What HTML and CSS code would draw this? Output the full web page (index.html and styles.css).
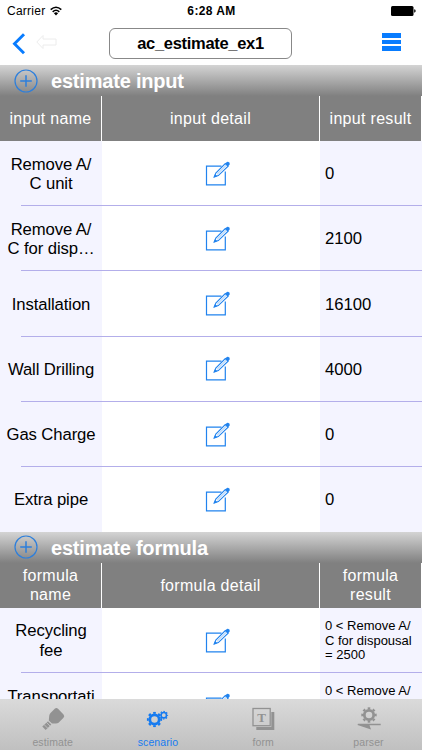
FILE: index.html
```
<!DOCTYPE html>
<html lang="en">
<head>
    <meta charset="UTF-8">
    <meta name="viewport" content="width=device-width, initial-scale=1.0">
    <title>ac_estimate_ex1</title>
    <link rel="stylesheet" href="styles.css">
</head>
<body>
    <!-- shared icons -->
    <svg class="defs">
        <symbol id="edit" viewBox="0 0 26 26">
            <path d="M16.5 5.2H1.5V23.8H20.3V10.5" fill="none" stroke="#2183ee" stroke-width="1.2"/>
            <path d="M9.2 16L10.8 12.1L20.3 2.5L23.1 5.2L13.3 14.6Z" fill="#fff" stroke="#2183ee" stroke-width="1.1"/>
            <path d="M12.2 13.2L21.3 4.2M9.2 16L10.2 13.4L11.9 15Z" fill="#2183ee" stroke="#2183ee" stroke-width=".5"/>
            <path d="M20.2 2.7L21.8 1.1Q23 .3 24.2 1.4Q25.2 2.6 24.5 3.8L22.8 5.4Z" fill="#2183ee"/>
        </symbol>
        <symbol id="plus" viewBox="0 0 24 24">
            <circle cx="12" cy="12" r="11" fill="none" stroke="#2d7fdc" stroke-width="1.2"/>
            <path d="M12 6.2V17.8M6.2 12H17.8" stroke="#2d7fdc" stroke-width="1.5"/>
        </symbol>
        <symbol id="gear" viewBox="0 0 16 16">
            <circle cx="8" cy="8" r="4.7" fill="none" stroke="currentColor" stroke-width="2.8"/>
            <circle cx="8" cy="8" r="6.7" fill="none" stroke="currentColor" stroke-width="2" pathLength="80" stroke-dasharray="5 5" stroke-dashoffset="2.5"/>
        </symbol>
    </svg>

    <div class="status">
        <div class="carrier">Carrier
            <svg width="12" height="10" viewBox="0 0 12 10"><path d="M.7 3.7Q6-1.2 11.3 3.7M2.7 5.8Q6 2.7 9.3 5.8" fill="none" stroke="#000" stroke-width="1.6"/><path d="M3.9 7.2Q6 5.5 8.1 7.2L6 9.4Z"/></svg>
        </div>
        <div class="time">6:28 AM</div>
        <svg class="battery" width="25" height="10" viewBox="0 0 25 10"><rect width="22.5" height="10" rx="1.5"/><path d="M23.2 3.3Q24.7 3.6 24.7 5T23.2 6.7Z"/></svg>
    </div>

    <div class="nav">
        <svg class="back" width="14" height="22" viewBox="0 0 14 22"><path d="M12 1.3L2.5 10.8L12 20.3" fill="none" stroke="#087cff" stroke-width="2.9"/></svg>
        <svg class="undo" width="21" height="16" viewBox="0 0 21 16"><path d="M.8 8L7 1.5V5H20V11H7V14.5Z" fill="none" stroke="#ececec"/></svg>
        <div class="title">ac_estimate_ex1</div>
        <div class="menu"><i></i><i></i><i></i></div>
    </div>

    <div class="content">
        <div class="section"><svg><use href="#plus"/></svg><h2>estimate input</h2></div>
        <div class="row head">
            <div class="name">input name</div><div class="detail">input detail</div><div class="result">input result</div>
        </div>
        <div class="row"><div class="name">Remove A/<br>C unit</div><div class="detail"><svg><use href="#edit"/></svg></div><div class="result">0</div></div>
        <div class="row"><div class="name">Remove A/<br>C for disp…</div><div class="detail"><svg><use href="#edit"/></svg></div><div class="result">2100</div></div>
        <div class="row"><div class="name">Installation</div><div class="detail"><svg><use href="#edit"/></svg></div><div class="result">16100</div></div>
        <div class="row"><div class="name">Wall Drilling</div><div class="detail"><svg><use href="#edit"/></svg></div><div class="result">4000</div></div>
        <div class="row"><div class="name">Gas Charge</div><div class="detail"><svg><use href="#edit"/></svg></div><div class="result">0</div></div>
        <div class="row last"><div class="name">Extra pipe</div><div class="detail"><svg><use href="#edit"/></svg></div><div class="result">0</div></div>

        <div class="section"><svg><use href="#plus"/></svg><h2>estimate formula</h2></div>
        <div class="row head">
            <div class="name">formula<br>name</div><div class="detail">formula detail</div><div class="result">formula<br>result</div>
        </div>
        <div class="row"><div class="name">Recycling<br>fee</div><div class="detail"><svg><use href="#edit"/></svg></div><div class="result small">0 &lt; Remove A/<br>C for dispousal<br>= 2500</div></div>
        <div class="row"><div class="name">Transportati<br><br></div><div class="detail"><svg><use href="#edit"/></svg></div><div class="result small">0 &lt; Remove A/<br><br><br></div></div>
    </div>

    <div class="tabs">
        <div class="tab">
            <svg width="26" height="26" viewBox="0 0 26 26"><path d="M10.5 7L15 2.5Q16.5 1.3 18 2.7L23.5 8.5Q25 10.2 23.5 11.8L18.5 16.7Q17.5 17.6 15.5 17.5L12 17.6L8.8 14.4L9.2 10Q9.3 8.3 10.5 7Z" fill="#929292"/><path d="M8 15.2L11.3 18.5L5.7 24L2.3 20.5Z" fill="#929292"/><path d="M6.3 16.3L10 20M4 18.5L7.8 22.3" stroke="#c8c8c8" stroke-width=".8"/></svg>
            <span>estimate</span>
        </div>
        <div class="tab active">
            <svg width="26" height="26" viewBox="0 0 26 26"><use href="#gear" x="1.5" y="5.5" width="16" height="16"/><use href="#gear" x="14.2" y="4.6" width="9.2" height="9.2"/></svg>
            <span>scenario</span>
        </div>
        <div class="tab">
            <svg width="26" height="26" viewBox="0 0 26 26"><path d="M21.3 6H24.3V24H6.3V21H21.3Z" fill="#929292"/><rect x="3" y="2.5" width="17.2" height="17.2" fill="none" stroke="#929292" stroke-width="1.3"/><text class="letter" x="11.7" y="15.6" text-anchor="middle">T</text></svg>
            <span>form</span>
        </div>
        <div class="tab">
            <svg width="26" height="26" viewBox="0 0 26 26"><use href="#gear" x="5" y="1" width="16" height="16"/><path d="M2 17.8H24.7V19.3H13.5L15 23.5L1.5 19Z" fill="#929292"/></svg>
            <span>parser</span>
        </div>
    </div>
</body>
</html>
```
FILE: styles.css
```
* {
    box-sizing: border-box;
}
body {
    margin: 0;
    height: 750px;
    overflow: hidden;
    display: flex;
    flex-direction: column;
    font-family: "Liberation Sans", Arial, sans-serif;
    font-size: 16.7px;
    color: #000;
    background: #fff;
}
svg {
    display: block;
    flex: none;
}
.defs {
    width: 0;
    height: 0;
    position: absolute;
}
.status {
    height: 22px;
    flex: none;
    display: grid;
    grid-template-columns: 1fr auto 1fr;
    align-items: center;
    padding: 0 6px 0 7px;
    font-size: 12px;
}
.carrier {
    display: flex;
    align-items: center;
    gap: 5px;
    letter-spacing: 0.25px;
}
.time {
    font-weight: bold;
    letter-spacing: 0.4px;
}
.battery {
    justify-self: end;
}
.nav {
    height: 43px;
    flex: none;
    display: flex;
    align-items: center;
    padding: 0 21px 0 12px;
}
.undo {
    margin-left: 10px;
    margin-top: -3px;
}
.title {
    width: 183px;
    height: 31px;
    margin-left: 52px;
    border: 1px solid #888;
    border-radius: 6px;
    font-weight: bold;
    font-size: 16.5px;
    letter-spacing: -0.3px;
    line-height: 29px;
    text-align: center;
}
.menu {
    margin-left: auto;
    margin-top: -3px;
    width: 19px;
    display: flex;
    flex-direction: column;
    gap: 1.7px;
}
.menu i {
    height: 4.7px;
    background: #087cff;
}
.content {
    flex: 1;
    min-height: 0;
    overflow: hidden;
}
.section {
    height: 31px;
    display: flex;
    align-items: center;
    padding-left: 14px;
    background: linear-gradient(#d4d4d4, #808080);
}
.section svg {
    width: 24px;
    height: 24px;
}
.section h2 {
    margin: 0 0 0 13px;
    font-size: 20px;
    letter-spacing: -0.2px;
    line-height: 24px;
    padding-top: 1px;
    color: #fff;
}
.row {
    position: relative;
    height: 65.15px;
    display: grid;
    grid-template-columns: 102px 218px 102px;
    line-height: 19.5px;
}
.row > div {
    display: flex;
    align-items: center;
    justify-content: center;
    text-align: center;
    padding-top: 1px;
}
.row .name {
    letter-spacing: -0.1px;
}
.row .name,
.row .result {
    background: #f4f4ff;
}
.row .result {
    justify-content: flex-start;
    text-align: left;
    padding-left: 5px;
}
.row .detail svg {
    width: 26px;
    height: 26px;
    margin-left: 13px;
}
/* separator starts after the left inset */
.row::after {
    content: "";
    position: absolute;
    z-index: 1;
    left: 21px;
    right: 0;
    bottom: -0.2px;
    height: 1px;
    background: #b3aeea;
}
.row.last::after,
.row.head::after {
    display: none;
}
.row.head {
    height: 45px;
    color: #fff;
    font-size: 16px;
}
.row.head > div {
    background: #808080;
    border-right: 1px solid #fff;
    justify-content: center;
    text-align: center;
    padding: 0;
    letter-spacing: 0.3px;
}
.row .small {
    font-size: 13px;
    line-height: 14.5px;
}
.tabs {
    height: 51px;
    flex: none;
    display: grid;
    grid-template-columns: repeat(4, 105.3px);
    background: linear-gradient(#dadada, #c0c0c0);
}
.tab {
    display: flex;
    flex-direction: column;
    align-items: center;
    padding-top: 7px;
    font-size: 10.5px;
    line-height: 12px;
    letter-spacing: 0.1px;
    color: #929292;
}
.tab span {
    margin-top: 4px;
}
.tab.active {
    color: #167bf0;
}
.letter {
    font-family: "Liberation Serif", serif;
    font-weight: bold;
    font-size: 13px;
    fill: #929292;
}
```
